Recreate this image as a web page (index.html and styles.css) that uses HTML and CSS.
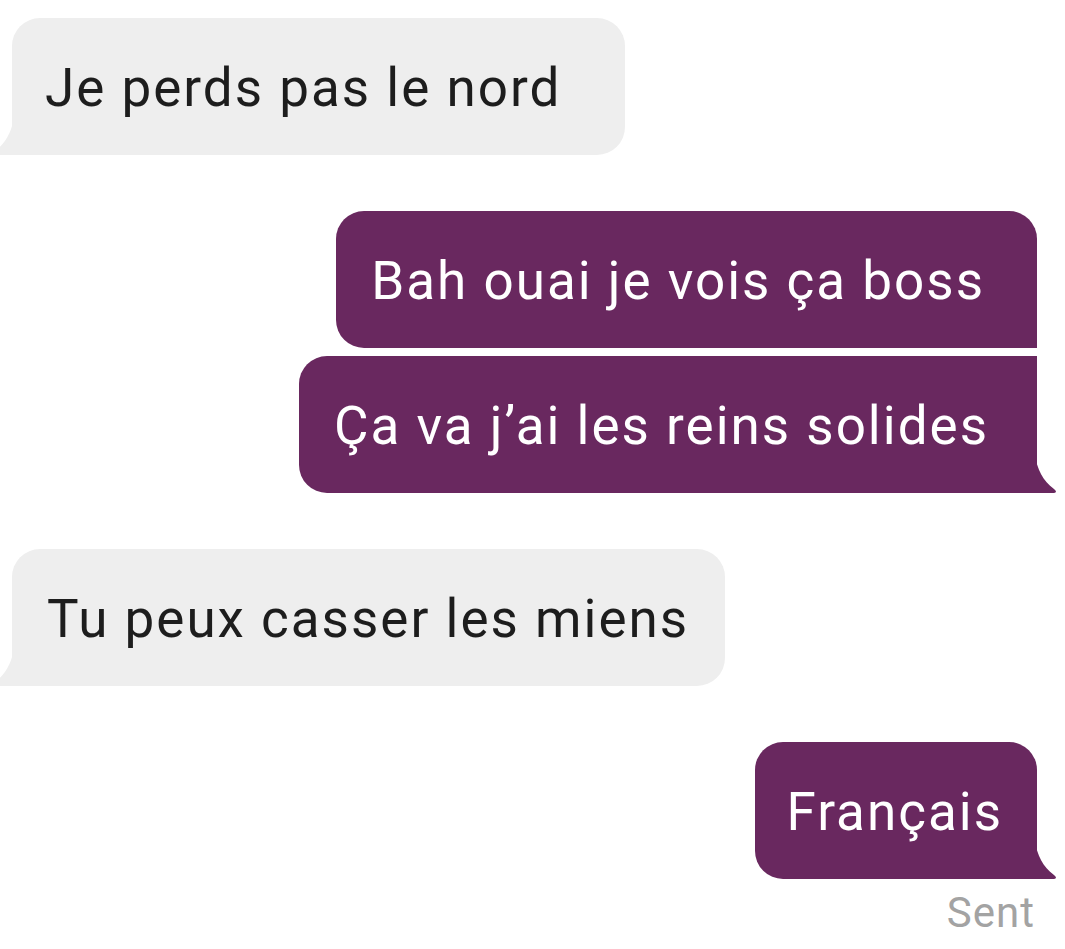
FILE: index.html
```html
<!DOCTYPE html>
<html lang="fr">
<head>
<meta charset="utf-8">
<title>Messages</title>
<link rel="stylesheet" href="styles.css">
</head>
<body>
<div class="thread">
  <div class="bubble in roomy-xl">Je perds pas le nord<svg class="tail tail-left" viewBox="0 0 22 38" aria-hidden="true"><path d="M22 0 C20 14 14 26 3 34 Q-1 37 3 38 L22 38 Z"/></svg></div>

  <div class="bubble out first roomy gap-lg">Bah ouai je vois ça boss</div>
  <div class="bubble out last roomy-sm gap-sm">Ça va j’ai les reins solides<svg class="tail tail-right" viewBox="0 0 22 38" aria-hidden="true"><path d="M0 0 C2 14 8 26 19 34 Q23 37 19 38 L0 38 Z"/></svg></div>

  <div class="bubble in gap-lg">Tu peux casser les miens<svg class="tail tail-left" viewBox="0 0 22 38" aria-hidden="true"><path d="M22 0 C20 14 14 26 3 34 Q-1 37 3 38 L22 38 Z"/></svg></div>

  <div class="bubble out single compact gap-lg">Français<svg class="tail tail-right" viewBox="0 0 22 38" aria-hidden="true"><path d="M0 0 C2 14 8 26 19 34 Q23 37 19 38 L0 38 Z"/></svg></div>
  <div class="status">Sent</div>
</div>
</body>
</html>
```

FILE: styles.css
```css
html, body {
  margin: 0;
  padding: 0;
  background: #ffffff;
}

body {
  font-family: Roboto, "Liberation Sans", Arial, sans-serif;
  overflow: hidden;
}

.thread {
  display: flex;
  flex-direction: column;
  padding: 18px 28px 0 12px;
}

.bubble {
  position: relative;
  font-size: 53px;
  line-height: 63px;
  letter-spacing: 2px;
  padding: 39px 36px 35px 35px;
  border-radius: 28px;
  white-space: nowrap;
}

.bubble.roomy {
  padding-right: 52px;
}

.bubble.roomy-xl {
  padding-left: 33px;
  padding-right: 64px;
}

.bubble.roomy-sm {
  padding-right: 48px;
}

.bubble.compact {
  padding-left: 32px;
  padding-right: 34px;
}

.in {
  align-self: flex-start;
  background: #eeeeee;
  color: #1d1d1d;
  border-bottom-left-radius: 0;
}

.out {
  align-self: flex-end;
  background: #69285f;
  color: #ffffff;
}

.out.first {
  border-bottom-right-radius: 0;
}

.out.last {
  border-top-right-radius: 0;
  border-bottom-right-radius: 0;
}

.out.single {
  border-bottom-right-radius: 0;
}

.gap-lg {
  margin-top: 56px;
}

.gap-sm {
  margin-top: 8px;
}

.tail {
  position: absolute;
  bottom: 0;
  width: 22px;
  height: 38px;
}

.tail-right {
  right: -20px;
}

.tail-right path {
  fill: #69285f;
}

.tail-left {
  left: -20px;
}

.tail-left path {
  fill: #eeeeee;
}

.status {
  align-self: flex-end;
  margin-top: 11px;
  margin-right: 2px;
  font-size: 42px;
  line-height: 46px;
  color: #a3a3a3;
  letter-spacing: 1px;
}
```
